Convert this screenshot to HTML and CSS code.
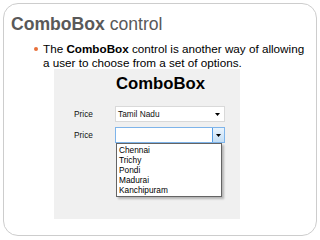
FILE: index.html
```html
<!DOCTYPE html>
<html>
<head>
<meta charset="utf-8">
<link rel="stylesheet" href="styles.css">
</head>
<body>
<div class="slide">
  <h1 class="title"><b>ComboBox</b> control</h1>
  <ul class="bullets">
    <li>The <b>ComboBox</b> control is another way of allowing a user to choose from a set of options.</li>
  </ul>
  <div class="form">
    <div class="form-title">ComboBox</div>
    <div class="rows">
      <span class="label">Price</span>
      <div class="combo">
        <span class="value">Tamil Nadu</span>
        <svg class="arrow" width="5" height="3" viewBox="0 0 5 3"><path d="M0 0H5L2.5 3Z" fill="#000"/></svg>
      </div>
      <span class="label">Price</span>
      <div class="combo open">
        <span class="value"></span>
        <div class="btn">
          <svg width="5" height="3" viewBox="0 0 5 3"><path d="M0 0H5L2.5 3Z" fill="#000"/></svg>
        </div>
        <ul class="list">
          <li>Chennai</li>
          <li>Trichy</li>
          <li>Pondi</li>
          <li>Madurai</li>
          <li>Kanchipuram</li>
        </ul>
      </div>
    </div>
  </div>
</div>
</body>
</html>
```
FILE: styles.css
```css
* { box-sizing: border-box; }
body {
  margin: 0;
  font-family: "Liberation Sans", Arial, sans-serif;
  background: #fff;
}
.slide {
  margin: 3px 0 0 3px;
  width: 314px;
  height: 233px;
  border: 1px solid #cdcdcd;
  border-radius: 15px;
  padding: 9px 0 0 7px;
  overflow: hidden;
  background: #fff;
}
.title {
  margin: 0;
  font-size: 17.6px;
  line-height: 22px;
  font-weight: normal;
  color: #595959;
}
.bullets {
  list-style: none;
  margin: 7px 0 0;
  padding: 0 0 0 32px;
}
.bullets li {
  position: relative;
  width: 268px;
  font-size: 11.7px;
  line-height: 14px;
  color: #000;
}
.bullets li::before {
  content: "";
  position: absolute;
  left: -9px;
  top: 5px;
  width: 4px;
  height: 4px;
  border-radius: 50%;
  background: #e8703a;
}
.form {
  margin: -1px 0 0 43px;
  width: 186px;
  height: 150px;
  background: #f0f0f0;
  padding-top: 5px;
}
.form-title {
  padding-left: 62px;
  font-size: 16.7px;
  line-height: 20px;
  font-weight: bold;
  color: #000;
}
.rows {
  display: grid;
  grid-template-columns: 41px 110px;
  row-gap: 5px;
  align-items: center;
  margin-top: 12px;
  padding-left: 20px;
  font-size: 8.3px;
  color: #111;
}
.combo {
  position: relative;
  height: 16px;
  display: flex;
  align-items: center;
  border: 1px solid #d9d9d9;
  background: #fff;
  padding-left: 2px;
}
.combo .arrow {
  margin-left: auto;
  margin-right: 4px;
}
.combo.open {
  border-color: #7eb4ea;
  padding-right: 0;
}
.btn {
  margin-left: auto;
  width: 12px;
  height: 14px;
  display: flex;
  align-items: center;
  justify-content: center;
  border-left: 1px solid #569de5;
  background: linear-gradient(#eaf4fd, #c4def5);
}
.list {
  position: absolute;
  top: calc(100% + 1px);
  left: 0;
  width: 106px;
  margin: 0;
  padding: 1px 0 1px 2px;
  list-style: none;
  border: 1px solid #646464;
  background: #fff;
  box-shadow: 2px 2px 2px rgba(0, 0, 0, 0.25);
  font-size: 8.3px;
  line-height: 10px;
  color: #000;
}
```
